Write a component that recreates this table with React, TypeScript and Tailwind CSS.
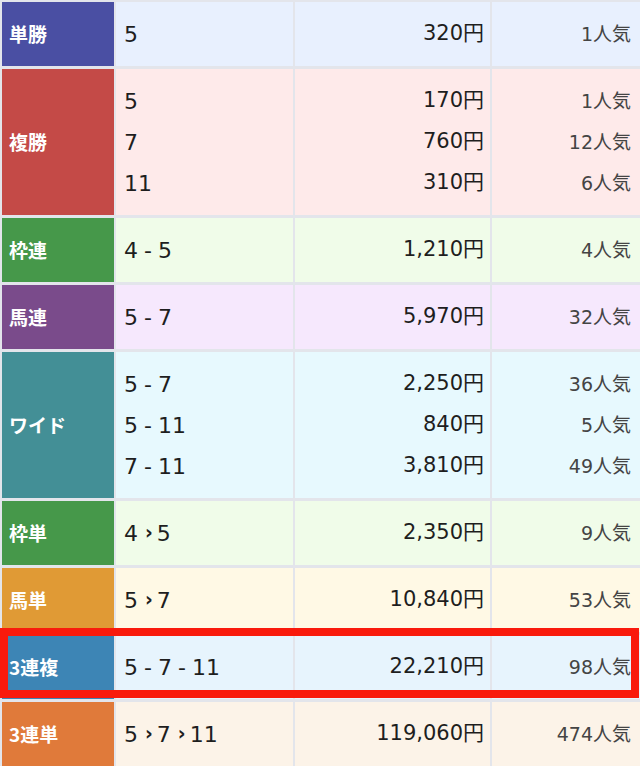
import React from "react";

type Row = {
  label: string;
  labelBg: string;
  rowBg: string;
  items: { combo: React.ReactNode; pay: string; pop: string }[];
  highlight?: boolean;
};

const Arrow = () => <span className="ml-[7px] mr-[4px] text-[19px] font-bold relative -top-[1px]">›</span>;
const Dash = () => <span className="mx-[6px]">-</span>;

const rows: Row[] = [
  { label: "単勝", labelBg: "bg-[#4a4fa3]", rowBg: "bg-[#e8f0fe]", items: [{ combo: "5", pay: "320円", pop: "1人気" }] },
  {
    label: "複勝",
    labelBg: "bg-[#c44a47]",
    rowBg: "bg-[#feeaea]",
    items: [
      { combo: "5", pay: "170円", pop: "1人気" },
      { combo: "7", pay: "760円", pop: "12人気" },
      { combo: "11", pay: "310円", pop: "6人気" },
    ],
  },
  { label: "枠連", labelBg: "bg-[#46984a]", rowBg: "bg-[#f0fce9]", items: [{ combo: <>4<Dash />5</>, pay: "1,210円", pop: "4人気" }] },
  { label: "馬連", labelBg: "bg-[#7a4b8b]", rowBg: "bg-[#f6e8fd]", items: [{ combo: <>5<Dash />7</>, pay: "5,970円", pop: "32人気" }] },
  {
    label: "ワイド",
    labelBg: "bg-[#438f96]",
    rowBg: "bg-[#e7f9fe]",
    items: [
      { combo: <>5<Dash />7</>, pay: "2,250円", pop: "36人気" },
      { combo: <>5<Dash />11</>, pay: "840円", pop: "5人気" },
      { combo: <>7<Dash />11</>, pay: "3,810円", pop: "49人気" },
    ],
  },
  { label: "枠単", labelBg: "bg-[#46984a]", rowBg: "bg-[#f0fce9]", items: [{ combo: <>4<Arrow />5</>, pay: "2,350円", pop: "9人気" }] },
  { label: "馬単", labelBg: "bg-[#e09a35]", rowBg: "bg-[#fff9e5]", items: [{ combo: <>5<Arrow />7</>, pay: "10,840円", pop: "53人気" }] },
  {
    label: "3連複",
    labelBg: "bg-[#3d85b5]",
    rowBg: "bg-[#e7f4fd]",
    items: [{ combo: <>5<Dash />7<Dash />11</>, pay: "22,210円", pop: "98人気" }],
    highlight: true,
  },
  {
    label: "3連単",
    labelBg: "bg-[#e07a3a]",
    rowBg: "bg-[#fcf3e8]",
    items: [{ combo: <>5<Arrow />7<Arrow />11</>, pay: "119,060円", pop: "474人気" }],
  },
];

const num = { fontFamily: '"DejaVu Sans", "Noto Sans CJK JP", sans-serif' };

export default function App() {
  return (
    <div
      className="w-[640px] h-[766px] overflow-hidden bg-[#e3e5eb] pt-[2px] pl-[2px] flex flex-col gap-[3px]"
      style={{ fontFamily: '"Noto Sans CJK JP", "Noto Sans", sans-serif' }}
    >
      {rows.map((r, i) => {
        const multi = r.items.length > 1;
        return (
          <div
            key={i}
            className={`relative grid grid-cols-[112px_177px_195px_1fr] gap-x-[2px] ${multi ? "h-[146px]" : "h-[64px]"}`}
          >
            <div className={`${r.labelBg} flex items-center pl-[7px] text-white font-bold text-[19px]`}>
              {r.label}
            </div>
            <div
              className={`${r.rowBg} flex flex-col justify-center pl-[8px] text-[22px] text-[#1e1e1e]`}
              style={num}
            >
              {r.items.map((it, j) => (
                <div key={j} className="h-[41px] flex items-center">{it.combo}</div>
              ))}
            </div>
            <div
              className={`${r.rowBg} flex flex-col justify-center items-end pr-[6px] text-[21px] text-[#1e1e1e]`}
              style={num}
            >
              {r.items.map((it, j) => (
                <div key={j} className="h-[41px] flex items-center">{it.pay}</div>
              ))}
            </div>
            <div
              className={`${r.rowBg} flex flex-col justify-center items-end pr-[9px] text-[19px] text-[#444]`}
              style={num}
            >
              {r.items.map((it, j) => (
                <div key={j} className="h-[41px] flex items-center">{it.pop}</div>
              ))}
            </div>
            {r.highlight && (
              <div className="absolute -top-[7px] -left-[2px] right-[1px] bottom-[1px] border-[8px] border-[#f91a0c] pointer-events-none" />
            )}
          </div>
        );
      })}
    </div>
  );
}
